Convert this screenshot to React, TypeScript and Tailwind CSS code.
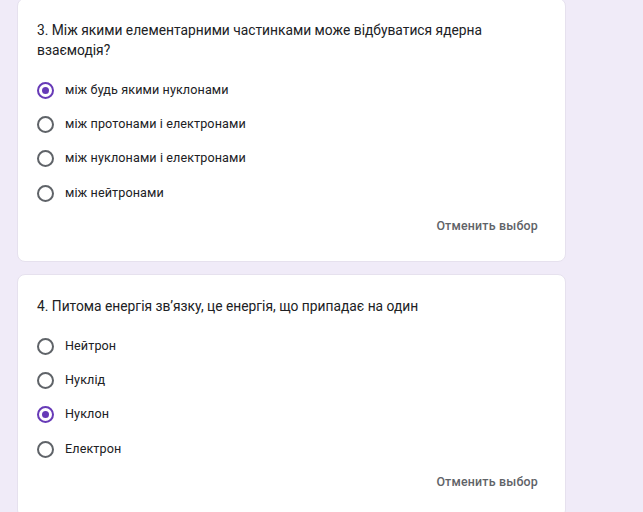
import React, { useState } from 'react';

type Question = {
  title: string;
  options: string[];
  selected: number;
};

const questions: Question[] = [
  {
    title: '3. Між якими елементарними частинками може відбуватися ядерна взаємодія?',
    options: [
      'між будь якими нуклонами',
      'між протонами і електронами',
      'між нуклонами і електронами',
      'між нейтронами',
    ],
    selected: 0,
  },
  {
    title: '4. Питома енергія зв’язку, це енергія, що припадає на один',
    options: ['Нейтрон', 'Нуклід', 'Нуклон', 'Електрон'],
    selected: 2,
  },
];

const Radio = ({ checked }: { checked: boolean }) => (
  <span
    className={
      checked
        ? 'flex h-[17px] w-[17px] shrink-0 items-center justify-center rounded-full border-2 border-[#673ab7]'
        : 'flex h-[17px] w-[17px] shrink-0 items-center justify-center rounded-full border-2 border-[#5f6368]'
    }
  >
    {checked && <span className="h-[7px] w-[7px] rounded-full bg-[#673ab7]" />}
  </span>
);

const QuestionCard = ({ q }: { q: Question }) => {
  const [selected, setSelected] = useState<number | null>(q.selected);

  return (
    <div className="w-[549px] rounded-lg border border-[#e6e1ee] bg-white pl-[19px] pr-[27px] pt-[21px] pb-[19px]">
      <div className="w-[470px] text-[13.8px] leading-[20px] text-[#202124]">{q.title}</div>
      <div className="mt-[13px] flex flex-col">
        {q.options.map((opt, i) => (
          <label
            key={opt}
            className="flex h-[34.3px] cursor-pointer items-center gap-[11px]"
            onClick={() => setSelected(i)}
          >
            <Radio checked={selected === i} />
            <span className="text-[12.6px] tracking-[0.1px] text-[#202124]">{opt}</span>
          </label>
        ))}
      </div>
      <div className="flex h-[32px] items-center justify-end">
        <button
          className="text-[12.4px] font-medium tracking-[0.2px] text-[#5f6368]"
          onClick={() => setSelected(null)}
        >
          Отменить выбор
        </button>
      </div>
    </div>
  );
};

export default function App() {
  return (
    <div
      className="min-h-[512px] overflow-hidden bg-[#f0ebf8] pl-[17px]"
      style={{ fontFamily: 'Roboto, "Noto Sans", sans-serif' }}
    >
      <div className="-mt-[2px] flex flex-col gap-[12px]">
        {questions.map((q) => (
          <QuestionCard key={q.title} q={q} />
        ))}
      </div>
    </div>
  );
}
